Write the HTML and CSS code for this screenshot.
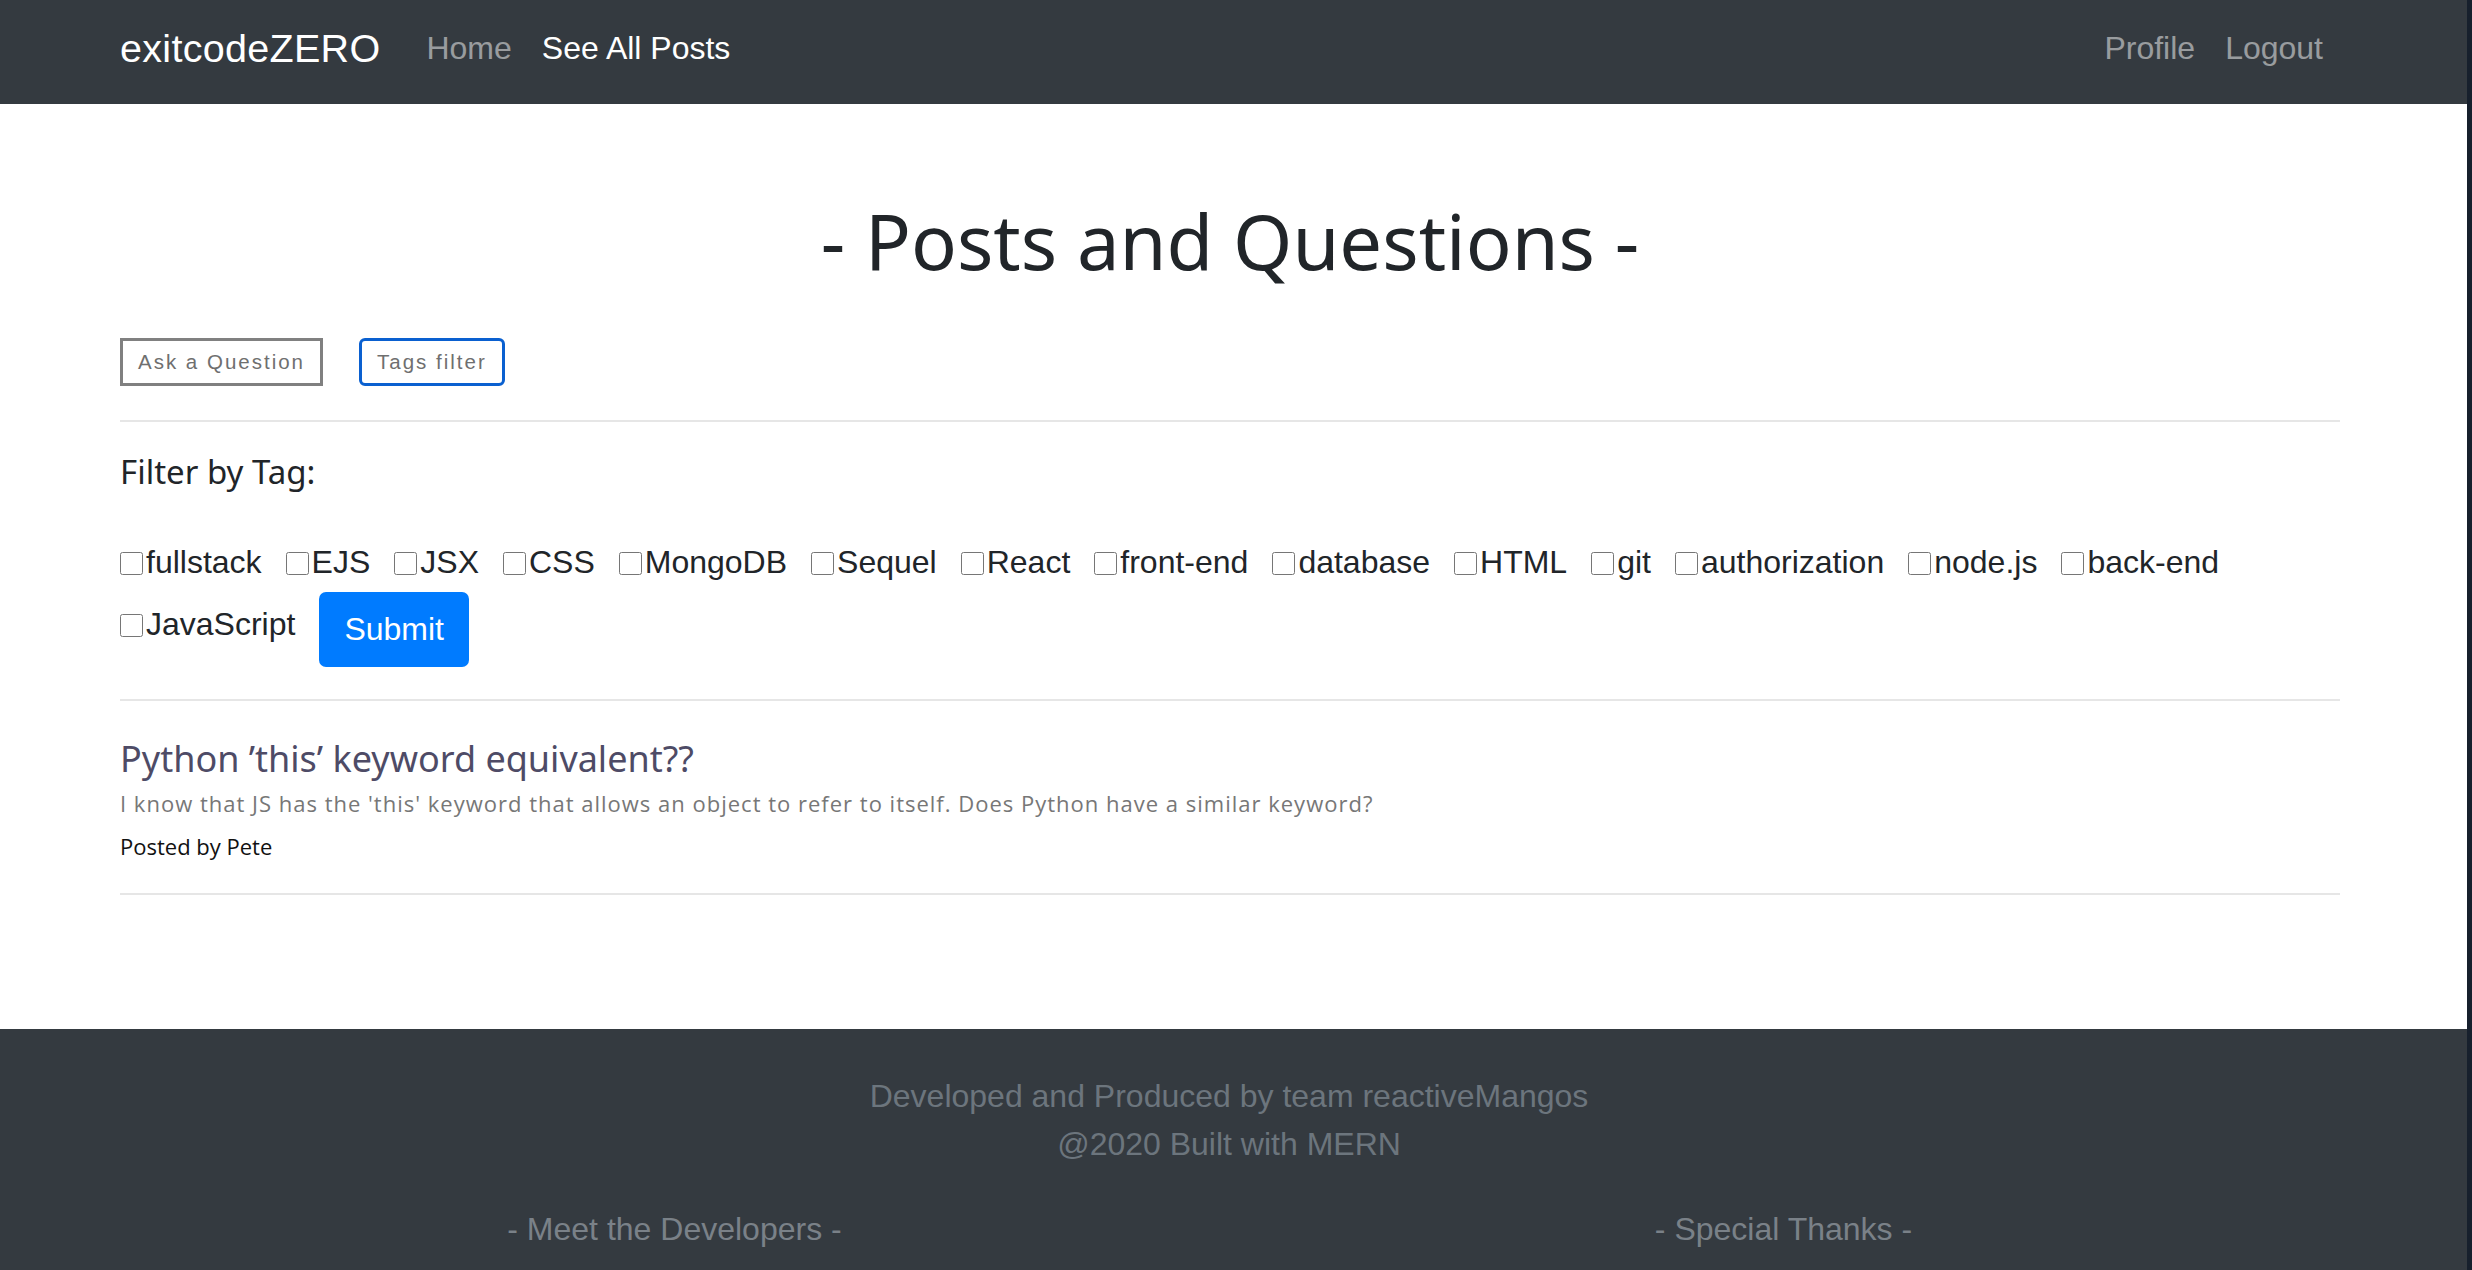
FILE: index.html
```html
<!DOCTYPE html>
<html lang="en">
<head>
<meta charset="utf-8">
<title>exitcodeZERO - Posts</title>
<link rel="stylesheet" href="styles.css">
</head>
<body>
<nav class="navbar">
  <div class="nav-left">
    <a class="brand" href="#">exitcodeZERO</a>
    <a class="nav-link" href="#">Home</a>
    <a class="nav-link active" href="#">See All Posts</a>
  </div>
  <div class="nav-right">
    <a class="nav-link" href="#">Profile</a>
    <a class="nav-link" href="#">Logout</a>
  </div>
</nav>

<main class="wrap">
  <h1 class="page-title">- Posts and Questions -</h1>

  <div class="actions">
    <button class="btn-outline btn-gray">Ask a Question</button>
    <button class="btn-outline btn-focus">Tags filter</button>
  </div>

  <hr class="rule">

  <h5 class="filter-title">Filter by Tag:</h5>

  <form class="tags">
    <label class="tag"><input type="checkbox"><span>fullstack</span></label>
    <label class="tag"><input type="checkbox"><span>EJS</span></label>
    <label class="tag"><input type="checkbox"><span>JSX</span></label>
    <label class="tag"><input type="checkbox"><span>CSS</span></label>
    <label class="tag"><input type="checkbox"><span>MongoDB</span></label>
    <label class="tag"><input type="checkbox"><span>Sequel</span></label>
    <label class="tag"><input type="checkbox"><span>React</span></label>
    <label class="tag"><input type="checkbox"><span>front-end</span></label>
    <label class="tag"><input type="checkbox"><span>database</span></label>
    <label class="tag"><input type="checkbox"><span>HTML</span></label>
    <label class="tag"><input type="checkbox"><span>git</span></label>
    <label class="tag"><input type="checkbox"><span>authorization</span></label>
    <label class="tag"><input type="checkbox"><span>node.js</span></label>
    <label class="tag"><input type="checkbox"><span>back-end</span></label>
    <label class="tag tag-last"><input type="checkbox"><span>JavaScript</span></label>
    <button type="button" class="btn-submit">Submit</button>
  </form>

  <hr class="rule rule-2">

  <article class="post">
    <h4 class="post-title">Python ’this’ keyword equivalent??</h4>
    <p class="post-body">I know that JS has the 'this' keyword that allows an object to refer to itself. Does Python have a similar keyword?</p>
    <p class="post-author">Posted by Pete</p>
  </article>

  <hr class="rule rule-3">
</main>

<footer class="footer">
  <p class="footer-line first">Developed and Produced by team reactiveMangos</p>
  <p class="footer-line">@2020 Built with MERN</p>
  <div class="footer-cols">
    <div class="footer-col">- Meet the Developers -</div>
    <div class="footer-col">- Special Thanks -</div>
  </div>
</footer>
</body>
</html>
```

FILE: styles.css
```css
html {
  background: #17202d;
}

body {
  margin: 0 5px 0 0;
  background: #ffffff;
  font-family: "Liberation Sans", Arial, Helvetica, sans-serif;
  color: #212529;
  min-height: 1270px;
  display: flex;
  flex-direction: column;
}

/* Navbar */
.navbar {
  background: #343a40;
  height: 104px;
  box-sizing: border-box;
  display: flex;
  align-items: center;
  justify-content: space-between;
  padding: 0 129px 7px 120px;
}

.nav-left,
.nav-right {
  display: flex;
  align-items: center;
}

.brand {
  color: #ffffff;
  text-decoration: none;
  font-size: 39.5px;
  margin-right: 31px;
  letter-spacing: 0.3px;
}

.nav-link {
  color: rgba(255, 255, 255, 0.5);
  text-decoration: none;
  font-size: 32px;
  padding: 0 15px;
}

.nav-link.active {
  color: #ffffff;
}

/* Main */
.wrap {
  padding: 0 127px 0 120px;
}

.page-title {
  margin: 91px 0 0;
  text-align: center;
  font-family: "Noto Sans", "DejaVu Sans", sans-serif;
  font-weight: 400;
  font-size: 76px;
  line-height: 92px;
  color: #212529;
}

.actions {
  display: flex;
  gap: 36px;
  margin-top: 51px;
}

.btn-outline {
  background: #ffffff;
  font-family: "Liberation Sans", Arial, sans-serif;
  font-size: 20.5px;
  letter-spacing: 2px;
  color: #6f6f6f;
  height: 48px;
  padding: 0 15px;
  cursor: pointer;
}

.btn-gray {
  border: 3px solid #808080;
  border-radius: 0;
}

.btn-focus {
  border: 3px solid #0a60d0;
  border-radius: 6px;
}

.rule {
  border: 0;
  border-top: 2px solid #e6e6e6;
  margin: 34px 0 0;
}

.filter-title {
  margin: 30px 0 0;
  font-family: "Noto Sans", "DejaVu Sans", sans-serif;
  font-weight: 400;
  font-size: 33px;
  line-height: 40px;
  color: #212529;
}

.tags {
  display: flex;
  flex-wrap: wrap;
  align-items: center;
  column-gap: 24px;
  row-gap: 10px;
  margin-top: 50px;
}

.tag {
  display: inline-flex;
  align-items: center;
  height: 40px;
  font-size: 32px;
  color: #212529;
}

.tag-last {
  align-self: flex-start;
  margin-top: 12px;
}

.tag input {
  width: 23px;
  height: 23px;
  margin: 2px 3px 0 0;
}

.btn-submit {
  background: #007bff;
  color: #ffffff;
  border: 0;
  border-radius: 7px;
  font-family: "Liberation Sans", Arial, sans-serif;
  font-size: 32px;
  height: 75px;
  padding: 0 25px;
  margin-left: 0;
  cursor: pointer;
}

.rule-2 {
  margin-top: 32px;
}

.post-title {
  margin: 33px 0 0;
  font-family: "Noto Sans", "DejaVu Sans", sans-serif;
  font-weight: 400;
  font-size: 36px;
  line-height: 50px;
  color: #4e4b66;
}

.post-body {
  margin: 4px 0 0;
  font-family: "Open Sans", "Noto Sans", sans-serif;
  font-size: 22px;
  line-height: 30px;
  letter-spacing: 1px;
  color: #777777;
}

.post-author {
  margin: 13px 0 0;
  font-family: "Open Sans", "Noto Sans", sans-serif;
  font-size: 22px;
  line-height: 30px;
  color: #111111;
}

.rule-3 {
  margin-top: 32px;
}

/* Footer */
.footer {
  margin-top: 134px;
  flex: 1;
  background: #343a40;
  padding: 43px 129px 0 120px;
  color: #6c757d;
  text-align: center;
}

.footer-line {
  margin: 0;
  font-size: 32px;
  line-height: 48px;
}

.footer-cols {
  display: grid;
  grid-template-columns: 1fr 1fr;
  margin-top: 37px;
}

.footer-col {
  font-size: 32px;
  line-height: 48px;
  color: #7a8188;
}
```
